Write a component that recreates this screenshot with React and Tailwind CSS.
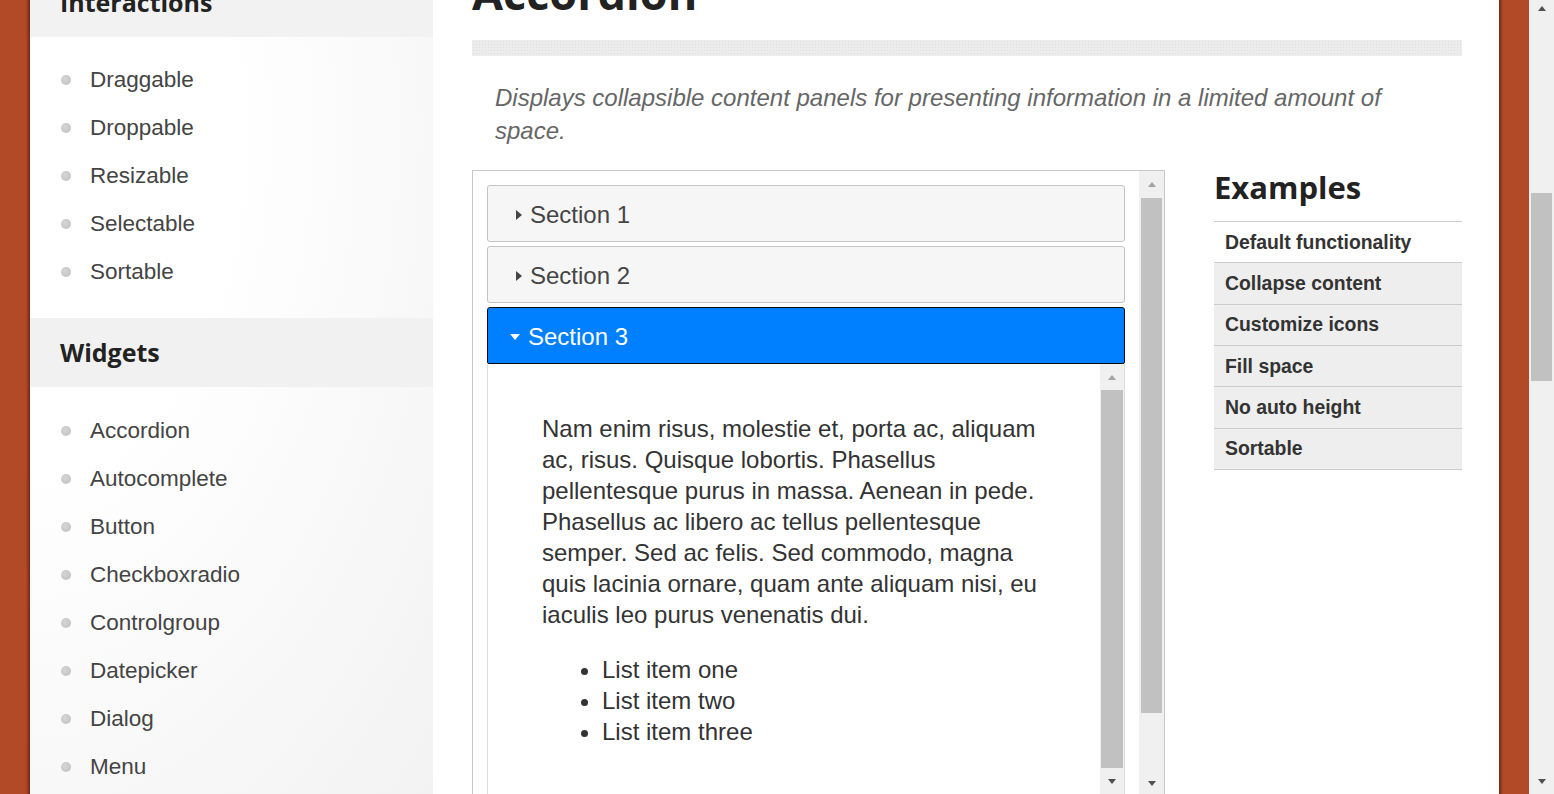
import React from 'react';

const interactions = ['Draggable', 'Droppable', 'Resizable', 'Selectable', 'Sortable'];
const widgets = ['Accordion', 'Autocomplete', 'Button', 'Checkboxradio', 'Controlgroup', 'Datepicker', 'Dialog', 'Menu', 'Progressbar', 'Selectmenu'];
const examples = ['Default functionality', 'Collapse content', 'Customize icons', 'Fill space', 'No auto height', 'Sortable'];

const heading = { fontFamily: '"Open Sans", "Liberation Sans", sans-serif' };

function ArrowUp({ dark }) {
    return <span className={`block w-0 h-0 border-x-[4.5px] border-x-transparent border-b-[5px] ${dark ? 'border-b-[#505050]' : 'border-b-[#a3a3a3]'}`} />;
}

function ArrowDown({ dark }) {
    return <span className={`block w-0 h-0 border-x-[4.5px] border-x-transparent border-t-[5px] ${dark ? 'border-t-[#505050]' : 'border-t-[#a3a3a3]'}`} />;
}

function NavList({ items, top, bottom }) {
    return (
        <ul className={`${top} ${bottom}`}>
            {items.map((item) => (
                <li key={item} className="h-[48px] flex items-center pl-[31px]">
                    <span className="w-[10px] h-[10px] rounded-full bg-[radial-gradient(circle_at_40%_40%,#d6d6d6,#bdbdbd)] mr-[19px]" />
                    <span className="text-[22.5px] text-[#444]">{item}</span>
                </li>
            ))}
        </ul>
    );
}

function SectionHeader({ title }) {
    return (
        <div className="h-[57px] rounded-[3px] border border-[#c5c5c5] bg-[#f6f6f6] flex items-center pt-[3px] pl-[28px] text-[24px] text-[#454545]">
            <span className="block w-0 h-0 border-y-[5px] border-y-transparent border-l-[6px] border-l-[#454545] mr-[8px]" />
            {title}
        </div>
    );
}

export default function App() {
    return (
        <div className="flex h-[794px] overflow-hidden bg-white" style={{ fontFamily: '"Liberation Sans", Arial, sans-serif' }}>
            {/* left brand strip */}
            <div className="w-[30px] shrink-0 bg-[linear-gradient(to_right,#b24a28_86%,#6a2a12)]" />

            {/* Sidebar */}
            <aside className="w-[403px] shrink-0 bg-[radial-gradient(ellipse_at_0%_20%,#ffffff_35%,#f2f2f2)] -mt-[32px]">
                <h3 className="h-[69px] bg-[#f2f2f2] flex items-center pl-[30px] text-[25px] font-bold text-[#222]" style={heading}>Interactions</h3>
                <NavList items={interactions} top="pt-[19px]" bottom="pb-[22px]" />
                <h3 className="h-[69px] bg-[#f1f1f1] flex items-center pl-[30px] text-[25px] font-bold text-[#222]" style={heading}>Widgets</h3>
                <NavList items={widgets} top="pt-[20px]" bottom="pb-[20px]" />
            </aside>

            {/* Main content */}
            <main className="w-[1066px] shrink-0 pl-[39px] pr-[37px]">
                <h1 className="text-[45px] leading-none font-bold text-[#222] -mt-[30px]" style={heading}>Accordion</h1>
                <div className="mt-[25px] h-[16px] bg-[#ececec] bg-[radial-gradient(#dedede_1px,transparent_1px)] bg-[size:3px_3px]" />

                <p className="mt-[25px] pl-[23px] pr-[60px] text-[24px] leading-[33px] italic text-[#666]">
                    Displays collapsible content panels for presenting information in a limited amount of space.
                </p>

                <div className="mt-[23px] flex items-start gap-[49px]">
                    {/* demo frame */}
                    <div className="w-[693px] h-[626px] border border-[#c8c8c8] flex">
                        <div className="flex-1 p-[14px]">
                            <SectionHeader title="Section 1" />
                            <div className="mt-[4px]">
                                <SectionHeader title="Section 2" />
                            </div>
                            <div className="mt-[4px] h-[57px] rounded-t-[3px] rounded-b-[2px] border-[1.5px] border-[#0b0b0b] bg-[#007fff] flex items-center pt-[3px] pl-[22px] text-[24px] text-white">
                                <span className="block w-0 h-0 border-x-[5px] border-x-transparent border-t-[6px] border-t-white mr-[8px]" />
                                Section 3
                            </div>
                            <div className="h-[432px] border-x border-b border-[#dddddd] bg-white flex">
                                <div className="flex-1 px-[54px] py-[24.5px] text-[24px] leading-[31px] text-[#333]">
                                    <p className="mt-[24.5px]">
                                        Nam enim risus, molestie et, porta ac, aliquam ac, risus. Quisque lobortis. Phasellus pellentesque purus in massa. Aenean in pede. Phasellus ac libero ac tellus pellentesque semper. Sed ac felis. Sed commodo, magna quis lacinia ornare, quam ante aliquam nisi, eu iaculis leo purus venenatis dui.
                                    </p>
                                    <ul className="mt-[24px] pl-[60px] list-disc">
                                        <li>List item one</li>
                                        <li>List item two</li>
                                        <li>List item three</li>
                                    </ul>
                                </div>
                                {/* panel scrollbar */}
                                <div className="w-[24px] bg-[#f0f0f0] flex flex-col">
                                    <div className="h-[26px] flex items-center justify-center"><ArrowUp /></div>
                                    <div className="h-[378px] mx-[1px] bg-[#c1c1c1]" />
                                    <div className="h-[26px] flex items-center justify-center"><ArrowDown dark /></div>
                                </div>
                            </div>
                        </div>
                        {/* frame scrollbar */}
                        <div className="w-[25px] bg-[#f0f0f0] flex flex-col">
                            <div className="h-[27px] flex items-center justify-center"><ArrowUp /></div>
                            <div className="h-[515px] mx-[2px] bg-[#c1c1c1]" />
                            <div className="flex-1" />
                            <div className="h-[24px] flex items-center justify-center"><ArrowDown dark /></div>
                        </div>
                    </div>

                    {/* examples */}
                    <div className="w-[248px]">
                        <h2 className="h-[51px] text-[31px] leading-[34px] font-bold text-[#222]" style={heading}>Examples</h2>
                        <ul className="border-t border-[#cccccc]">
                            {examples.map((ex, i) => (
                                <li key={ex} className={`h-[41.33px] border-b border-[#cccccc] flex items-center pl-[11px] text-[19.4px] font-bold text-[#333] ${i === 0 ? 'bg-white' : 'bg-[#eeeeee]'}`}>
                                    {ex}
                                </li>
                            ))}
                        </ul>
                    </div>
                </div>
            </main>

            {/* right brand strip */}
            <div className="w-[30px] shrink-0 bg-[linear-gradient(to_right,#6a2a12,#b24a28_14%)]" />

            {/* page scrollbar */}
            <div className="w-[25px] shrink-0 bg-[#f0f0f0] flex flex-col">
                <div className="h-[17px] flex items-center justify-center"><ArrowUp dark /></div>
                <div className="h-[176px]" />
                <div className="h-[188px] mx-[2px] bg-[#c1c1c1]" />
                <div className="flex-1" />
                <div className="h-[26px] flex items-center justify-center"><ArrowDown dark /></div>
            </div>
        </div>
    );
}
